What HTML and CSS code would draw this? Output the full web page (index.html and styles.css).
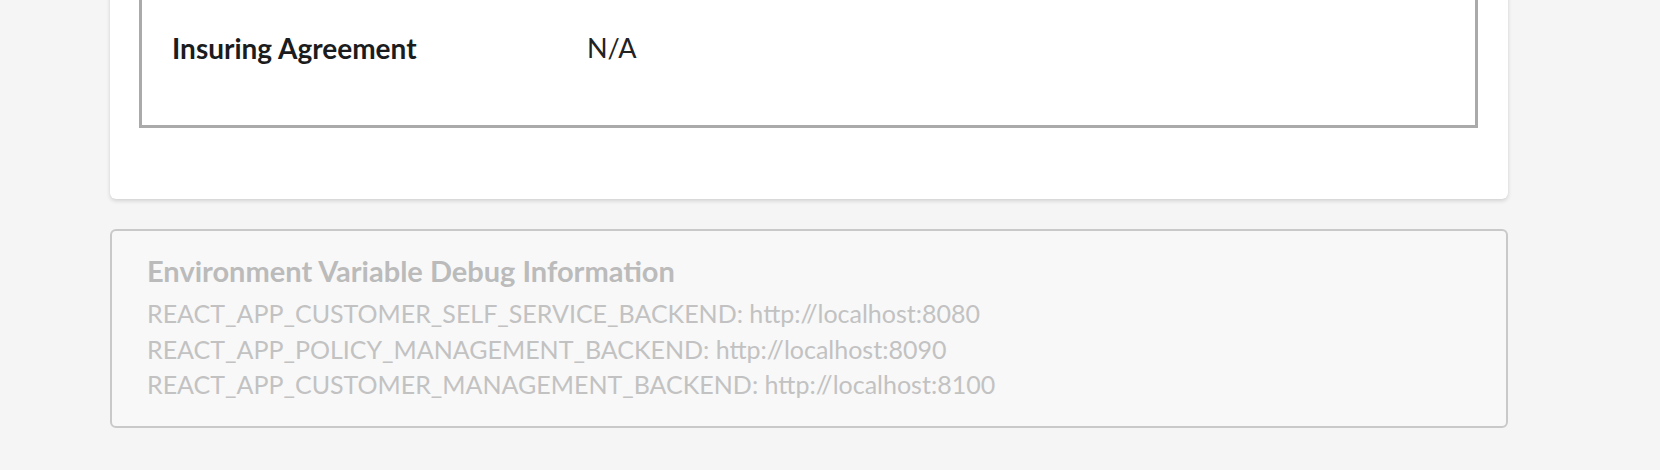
FILE: index.html
```html
<!DOCTYPE html>
<html lang="en">
<head>
<meta charset="utf-8">
<title>Policy</title>
<link rel="stylesheet" href="styles.css">
</head>
<body>
<div class="page">
  <div class="card">
    <div class="table-box">
      <div class="row">
        <div class="label">Insuring Agreement</div>
        <div class="value">N/A</div>
      </div>
    </div>
  </div>
  <div class="debug">
    <div class="debug-title">Environment Variable Debug Information</div>
    <div class="debug-line">REACT_APP_CUSTOMER_SELF_SERVICE_BACKEND: http://localhost:8080</div>
    <div class="debug-line">REACT_APP_POLICY_MANAGEMENT_BACKEND: http://localhost:8090</div>
    <div class="debug-line">REACT_APP_CUSTOMER_MANAGEMENT_BACKEND: http://localhost:8100</div>
  </div>
</div>
</body>
</html>
```

FILE: styles.css
```css
html, body {
  margin: 0;
  padding: 0;
  background: #f5f5f5;
  font-family: Lato, "Open Sans", "Liberation Sans", sans-serif;
}

.page {
  width: 1398px;
  margin-left: 110px;
  display: flex;
  flex-direction: column;
  gap: 30px;
}

.card {
  margin-top: -61px;
  background: #ffffff;
  border-radius: 6px;
  box-shadow: 0 2px 4px rgba(0, 0, 0, 0.14), 0 0 1px rgba(0, 0, 0, 0.08);
  padding: 0 30px 71px 29px;
}

.table-box {
  border: 3px solid #aaaaaa;
  padding: 89px 0 60px 30px;
}

.row {
  display: flex;
  align-items: center;
  height: 34px;
  line-height: 34px;
  font-size: 28px;
}

.label {
  width: 415px;
  font-weight: 700;
  color: #1b1c1d;
}

.value {
  font-size: 27px;
  color: #222222;
}

.debug {
  background: #f8f8f8;
  border: 2px solid #c9c9c9;
  border-radius: 6px;
  padding: 22px 35px 0;
  height: 199px;
  box-sizing: border-box;
}

.debug-title {
  font-weight: 700;
  font-size: 29px;
  line-height: 36px;
  color: #bbbbbb;
  margin-bottom: 7px;
}

.debug-line {
  font-size: 25px;
  line-height: 35.5px;
  color: #c2c2c2;
}
```
